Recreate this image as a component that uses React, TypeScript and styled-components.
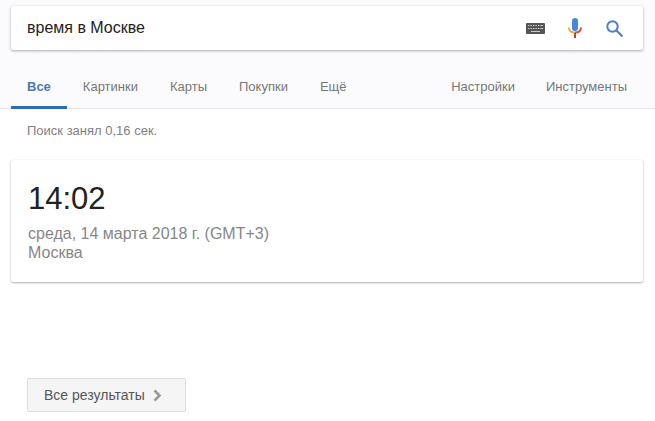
import styled, { createGlobalStyle } from "styled-components";

const GlobalStyle = createGlobalStyle`
  html, body {
    margin: 0;
    padding: 0;
    background: #fff;
    font-family: "Liberation Sans", Arial, sans-serif;
  }
`;

const Page = styled.div`
  width: 655px;
  height: 421px;
  overflow: hidden;
  background: #fff;
`;

const Header = styled.div`
  background: #fbfbfd;
  border-bottom: 1px solid #e6e6ea;
  height: 109px;
  padding: 6px 0 0;
  box-sizing: border-box;
`;

const SearchBar = styled.div`
  margin-left: 11px;
  width: 632px;
  height: 44px;
  background: #fff;
  border-radius: 2px;
  box-shadow: 0 1px 3px rgba(0, 0, 0, 0.32);
  display: flex;
  align-items: center;
  padding: 0 20px 0 16px;
  box-sizing: border-box;
`;

const Query = styled.div`
  flex: 1;
  font-size: 16px;
  color: #222;
`;

const Icons = styled.div`
  display: flex;
  align-items: center;
  gap: 23px;
`;

const SearchSvg = styled.svg`
  margin-left: 1px;
`;

const Tabs = styled.div`
  display: flex;
  margin-top: 16px;
  height: 42px;
  padding: 0 28px 0 27px;
  justify-content: space-between;
`;

const TabGroup = styled.div<{ $gap: number }>`
  display: flex;
  gap: ${(p) => p.$gap}px;
`;

const Tab = styled.div<{ $active?: boolean }>`
  font-size: 13px;
  padding: 13px 0 0;
  height: 42px;
  box-sizing: border-box;
  color: ${(p) => (p.$active ? "#4a78b5" : "#777")};
  font-weight: ${(p) => (p.$active ? "bold" : "normal")};
  position: relative;
  ${(p) =>
    p.$active
      ? `&::after {
          content: "";
          position: absolute;
          left: -16px;
          right: -16px;
          bottom: -1px;
          height: 3px;
          background: #2f6cb5;
        }`
      : ""}
`;

const Stats = styled.div`
  font-size: 13px;
  color: #808080;
  padding: 14px 0 0 27px;
  height: 51px;
  box-sizing: border-box;
`;

const Card = styled.div`
  margin-left: 11px;
  width: 632px;
  height: 122px;
  box-sizing: border-box;
  padding: 21px 17px 0;
  background: #fff;
  border-radius: 2px;
  box-shadow: 0 1px 2px rgba(0, 0, 0, 0.3), 0 0 1px rgba(0, 0, 0, 0.16);
`;

const Time = styled.div`
  font-size: 31px;
  line-height: 36px;
  color: #222;
`;

const Sub = styled.div`
  font-size: 16px;
  line-height: 19px;
  color: #878787;
`;

const DateLine = styled(Sub)`
  margin-top: 7px;
`;

const MoreButton = styled.div`
  margin: 96px 0 0 27px;
  width: 159px;
  height: 34px;
  box-sizing: border-box;
  background: #f5f5f5;
  border: 1px solid #dcdcdc;
  border-radius: 2px;
  display: flex;
  align-items: center;
  padding-left: 16px;
  gap: 8px;
  font-size: 14px;
  color: #555;
`;

const KeyboardIcon = () => (
  <svg width="19" height="11" viewBox="0 0 19 11">
    <rect width="19" height="11" rx="1" fill="#555" />
    <path
      d="M2 2.500h1.500M4.500 2.500h1.500M7 2.500h1.500M9.500 2.500h1.500M12 2.500h1.500M14.500 2.500h2.500M2 5.500h1.500M4.500 5.500h1.500M7 5.500h1.500M9.500 5.500h1.500M12 5.500h1.500M14.500 5.500h2.500M5 8.500h9"
      stroke="#ccc"
      strokeWidth="1.200"
    />
  </svg>
);

const MicIcon = () => (
  <svg width="14" height="20" viewBox="0 0 14 20">
    <rect x="4" y="0" width="6" height="13" rx="3" fill="#4a86d8" />
    <path d="M1 9.500c0 3.500 2.500 5 6 5" fill="none" stroke="#e8b13c" strokeWidth="2" />
    <path d="M13 9.500c0 3.500-2.500 5-6 5" fill="none" stroke="#d9503f" strokeWidth="2" />
    <rect x="6" y="15" width="2" height="5" fill="#b5493a" />
  </svg>
);

const SearchIcon = () => (
  <SearchSvg width="17" height="17" viewBox="0 0 17 17">
    <circle cx="6.500" cy="6.500" r="5.200" fill="none" stroke="#4a7fc9" strokeWidth="2" />
    <path d="M10.500 10.500l6 6" stroke="#4a7fc9" strokeWidth="2.200" />
  </SearchSvg>
);

const Chevron = () => (
  <svg width="9" height="13" viewBox="0 0 9 13">
    <path d="M1.500 1.500l5 5-5 5" fill="none" stroke="#999" strokeWidth="2.600" />
  </svg>
);

const App = () => {
  return (
    <Page>
      <GlobalStyle />
      <Header>
        <SearchBar>
          <Query>время в Москве</Query>
          <Icons>
            <KeyboardIcon />
            <MicIcon />
            <SearchIcon />
          </Icons>
        </SearchBar>
        <Tabs>
          <TabGroup $gap={32}>
            <Tab $active>Все</Tab>
            <Tab>Картинки</Tab>
            <Tab>Карты</Tab>
            <Tab>Покупки</Tab>
            <Tab>Ещё</Tab>
          </TabGroup>
          <TabGroup $gap={31}>
            <Tab>Настройки</Tab>
            <Tab>Инструменты</Tab>
          </TabGroup>
        </Tabs>
      </Header>
      <Stats>Поиск занял 0,16 сек.</Stats>
      <Card>
        <Time>14:02</Time>
        <DateLine>среда, 14 марта 2018 г. (GMT+3)</DateLine>
        <Sub>Москва</Sub>
      </Card>
      <MoreButton>
        Все результаты
        <Chevron />
      </MoreButton>
    </Page>
  );
};

export default App;
